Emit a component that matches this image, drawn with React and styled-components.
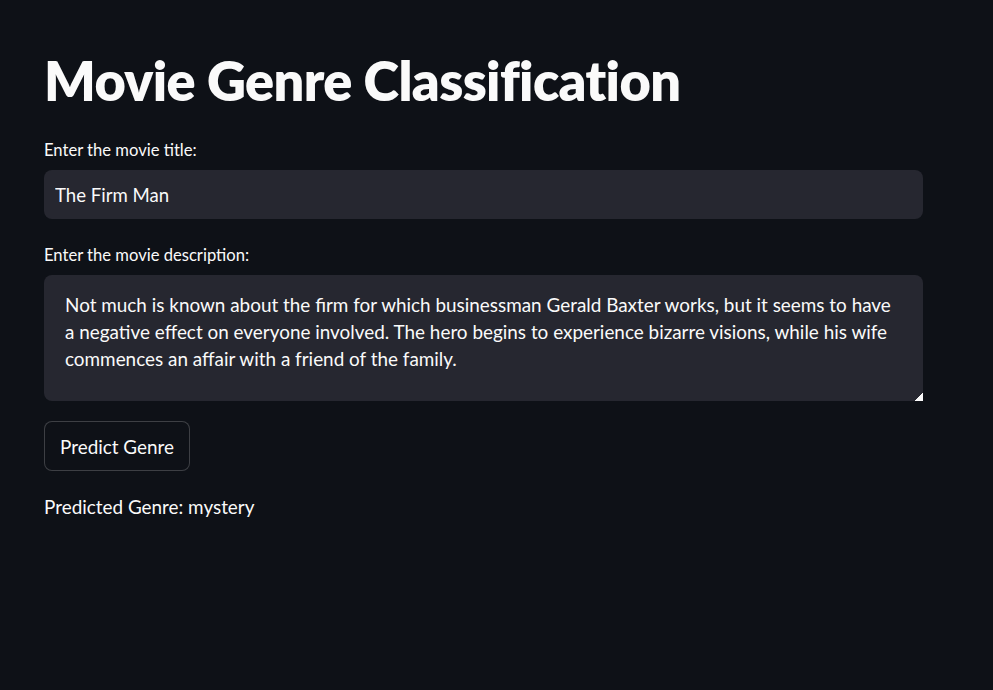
import React, { useState } from "react";
import styled, { createGlobalStyle } from "styled-components";

const GlobalStyle = createGlobalStyle`
  html, body {
    margin: 0;
    padding: 0;
    background: #0e1117;
    color: #fafafa;
    font-family: "Lato", "Liberation Sans", sans-serif;
  }
`;

const Page = styled.main`
  min-height: 690px;
  box-sizing: border-box;
  padding: 42px 70px 40px 44px;
  display: flex;
  flex-direction: column;
`;

const Title = styled.h1`
  margin: 0 0 18px;
  font-size: 54px;
  font-weight: 800;
  line-height: 78px;
  letter-spacing: -0.6px;
`;

const Field = styled.div`
  display: flex;
  flex-direction: column;
  margin-bottom: ${(p) => p.$gap || 16}px;
`;

const Label = styled.label`
  font-size: 16.6px;
  line-height: 24px;
  margin-bottom: 8px;
`;

const Input = styled.input`
  height: 49px;
  box-sizing: border-box;
  border: none;
  outline: none;
  border-radius: 8px;
  background: #262730;
  color: #fafafa;
  font: inherit;
  font-size: 18.6px;
  padding: 0 11px;
`;

const TextArea = styled.textarea`
  height: 126px;
  box-sizing: border-box;
  border: none;
  outline: none;
  border-radius: 8px;
  background: #262730;
  color: #fafafa;
  font: inherit;
  font-size: 18.9px;
  line-height: 27px;
  padding: 16px 21px;
  resize: vertical;

  /* small light grip like the reference */
  &::-webkit-resizer {
    background: linear-gradient(135deg, transparent 73%, #fafafa 73%);
  }
`;

const Button = styled.button`
  align-self: flex-start;
  height: 50px;
  padding: 0 15px;
  border-radius: 8px;
  border: 1px solid rgba(250, 250, 250, 0.2);
  background: #0e1117;
  color: #fafafa;
  font: inherit;
  font-size: 18.9px;
  cursor: pointer;
  margin-bottom: 22px;
`;

const Result = styled.p`
  margin: 0;
  font-size: 18.9px;
  line-height: 28px;
`;

export default function App() {
  const [title, setTitle] = useState("The Firm Man");
  const [desc, setDesc] = useState(
    "Not much is known about the firm for which businessman Gerald Baxter works, but it seems to have a negative effect on everyone involved. The hero begins to experience bizarre visions, while his wife commences an affair with a friend of the family."
  );

  return (
    <>
      <GlobalStyle />
      <Page>
        <Title>Movie Genre Classification</Title>
        <Field $gap={24}>
          <Label>Enter the movie title:</Label>
          <Input value={title} onChange={(e) => setTitle(e.target.value)} />
        </Field>
        <Field $gap={20}>
          <Label>Enter the movie description:</Label>
          <TextArea value={desc} onChange={(e) => setDesc(e.target.value)} />
        </Field>
        <Button>Predict Genre</Button>
        <Result>Predicted Genre: mystery</Result>
      </Page>
    </>
  );
}
